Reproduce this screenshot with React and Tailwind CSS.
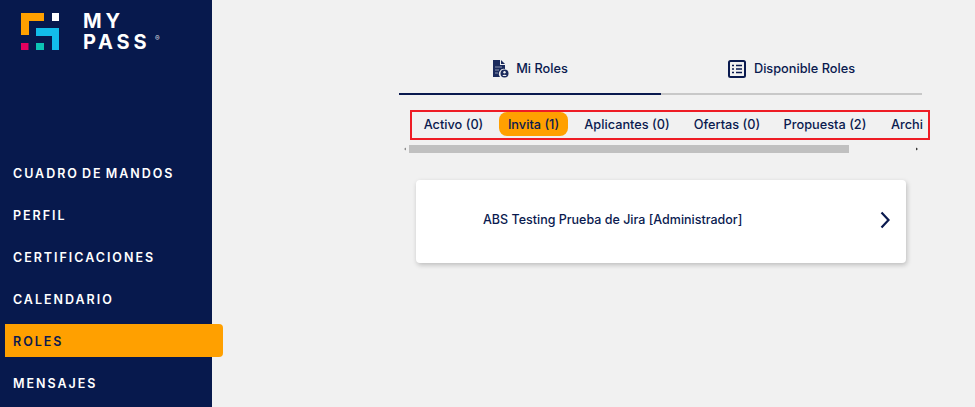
import React from "react";

const font = { fontFamily: '"Inter", "Liberation Sans", sans-serif' };
const nav = ["CUADRO DE MANDOS", "PERFIL", "CERTIFICACIONES", "CALENDARIO", "ROLES", "MENSAJES"];
const pills = [
  ["Activo (0)", 0, "w-[75px] ml-[3px]"],
  ["Invita (1)", 1, "w-[69px] ml-[8px]"],
  ["Aplicantes (0)", 0, "w-[102px] ml-[8px]"],
  ["Ofertas (0)", 0, "w-[82px] ml-[8px]"],
  ["Propuesta (2)", 0, "w-[98px] ml-[8px]"],
];

function Logo() {
  return (
    <svg width="38" height="37" viewBox="0 0 38 37" className="block shrink-0">
      <path d="M0 0H23V8H8V22H0Z" fill="#FFA000" />
      <rect x="31" y="0" width="7.500" height="8" fill="#ffffff" />
      <path d="M15 15H38V37H31V23H15Z" fill="#12BDEB" />
      <rect x="0" y="30" width="7.500" height="7" fill="#E5005F" />
      <rect x="15" y="30" width="8" height="7" fill="#0CC4B5" />
    </svg>
  );
}

export default function App() {
  return (
    <div className="flex h-[407px] w-[975px] overflow-hidden bg-[#f1f1f1] text-[#0a1a4f]" style={font}>
      <aside className="relative w-[212px] shrink-0 bg-[#07194d]">
        <div className="flex pl-[21px] pt-[13px]">
          <Logo />
          <div className="ml-[24px] mt-[-2px] text-[20px] font-bold leading-[21px] tracking-[0.19em] text-white">
            <div>MY</div>
            <div className="relative">PASS<span className="absolute left-[72px] top-[-4px] text-[7px] tracking-normal text-gray-300">®</span></div>
          </div>
        </div>
        <nav className="mt-[103px] flex flex-col">
          {nav.map((n) => (
            <div
              key={n}
              className={
                "mb-[9px] ml-[5px] flex h-[33px] items-center pl-[8px] pt-[4px] text-[12.500px] font-semibold tracking-[0.158em] [word-spacing:-2px] " +
                (n === "ROLES"
                  ? "w-[218px] rounded-r-[4px] bg-[#ffa000] text-[#0a1a4f]"
                  : "text-white")
              }
            >
              {n}
            </div>
          ))}
        </nav>
      </aside>

      <main className="ml-[187px] w-[532px] pt-[57px]">
        <div className="flex w-[523px]">
          <div className="flex h-[38px] w-[262px] items-start justify-center gap-[7px] border-b-2 border-[#0a1a4f] pt-[3px]">
            <svg width="17" height="18" viewBox="0 0 17 18">
              <path d="M1 0H8V5H13V9A5 5 0 0 0 8 17H1Z" fill="#1a2a5c" />
              <path d="M9 0L13 4H9Z" fill="#1a2a5c" />
              <circle cx="12.500" cy="13.500" r="4" fill="#1a2a5c" />
              <circle cx="12.500" cy="12.300" r="1.200" fill="#f1f1f1" />
              <path d="M10.300 16A2.400 2 0 0 1 14.700 16Z" fill="#f1f1f1" />
              <path d="M3 7H10M3 10H7M3 13H6" stroke="#8a94ae" strokeWidth="1" />
            </svg>
            <span className="text-[12.750px] font-medium leading-[18px]">Mi Roles</span>
          </div>
          <div className="flex h-[38px] w-[261px] items-start justify-center gap-[8px] border-b-2 border-[#c8c8c8] pt-[3px]">
            <svg width="18" height="18" viewBox="0 0 18 18" fill="none" stroke="#0a1a4f">
              <rect x="1" y="1" width="16" height="16" rx="1.500" strokeWidth="2" />
              <path d="M4 5.500H6M8 5.500H14M4 9H6M8 9H14M4 12.500H6M8 12.500H14" strokeWidth="1.600" />
            </svg>
            <span className="text-[12.750px] font-medium leading-[18px]">Disponible Roles</span>
          </div>
        </div>

        <div className="ml-[11px] mt-[15px] h-[30px] w-[520px] border-2 border-[#ee1c25] pl-[1px]">
          <div className="flex h-[24px] w-[510px] items-center overflow-hidden">
            {pills.map(([t, active, cls]) => (
              <div
                key={t}
                className={
                  "flex h-[24px] shrink-0 items-center justify-center whitespace-nowrap rounded-[8px] pt-[1px] text-[12.750px] font-medium " +
                  cls + (active ? " bg-[#ffa000]" : "")
                }
              >
                {t}
              </div>
            ))}
            <span className="ml-[17px] shrink-0 pt-[1px] text-[12.750px] font-medium">Archivado</span>
          </div>
        </div>

        <div className="ml-[2px] mt-[4px] flex h-[10px] w-[520px] items-center">
          <svg width="8" height="8" viewBox="0 0 8 8" className="shrink-0"><path d="M5 2.500V5.500L3 4Z" fill="#8a8a8a" /></svg>
          <div className="h-[8px] w-[440px] bg-[#c0c0c0]" />
          <svg width="8" height="8" viewBox="0 0 8 8" className="ml-[64px] shrink-0"><path d="M3 2.500V5.500L5 4Z" fill="#333" /></svg>
        </div>

        <div className="ml-[17px] mt-[26px] flex h-[83px] w-[490px] items-center justify-between rounded-[4px] bg-white pl-[67px] pr-[15px] shadow-[1px_2px_5px_rgba(0,0,0,0.22)]">
          <span className="pb-[2px] text-[12.500px] font-medium">ABS Testing Prueba de Jira [Administrador]</span>
          <svg width="12" height="18" viewBox="0 0 12 18" fill="none" stroke="#0a1a4f" strokeWidth="2.200" className="mb-[3px]">
            <path d="M2.500 1.500L9.500 9L2.500 16.500" />
          </svg>
        </div>
      </main>
    </div>
  );
}
